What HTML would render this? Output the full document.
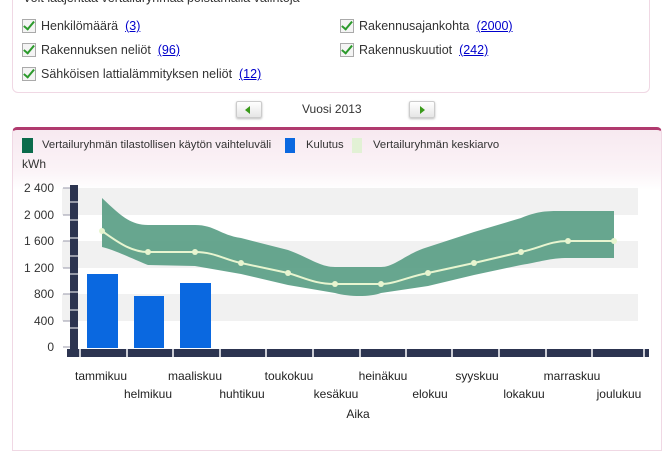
<!DOCTYPE html><html><head><style>
body{margin:0;width:662px;height:433px;overflow:hidden;background:#fff;font-family:"Liberation Sans",sans-serif;font-size:12px;color:#333;position:relative}
.a{position:absolute;white-space:nowrap}
.cb{position:absolute;width:12px;height:12px;border:1px solid #aaa;background:#f4f4f4}
.cb:after{content:"";position:absolute;left:3px;top:-1px;width:4px;height:9px;border:solid #2c9a2c;border-width:0 2px 2px 0;transform:rotate(40deg)}
a{color:#00c;text-decoration:underline}
.nb{position:absolute;width:24px;height:15px;border:1px solid #ccc;border-radius:2px;background:linear-gradient(#fff,#e6e6e6);box-shadow:0 1px 2px #bbb}
.t{font-size:12.5px}
</style></head><body>
<div class="a" style="left:12px;top:-12px;width:636px;height:103px;border:1px solid #f0d8e4;border-radius:6px"></div>
<div class="a t" style="left:23px;top:-9px">Voit laajentaa vertailuryhmää poistamalla valintoja</div>
<div class="cb" style="left:22px;top:19px"></div><div class="a t" style="left:41px;top:19px">Henkilömäärä &nbsp;<a>(3)</a></div>
<div class="cb" style="left:22px;top:43px"></div><div class="a t" style="left:41px;top:43px">Rakennuksen neliöt &nbsp;<a>(96)</a></div>
<div class="cb" style="left:22px;top:67px"></div><div class="a t" style="left:41px;top:67px">Sähköisen lattialämmityksen neliöt &nbsp;<a>(12)</a></div>
<div class="cb" style="left:340px;top:19px"></div><div class="a t" style="left:359px;top:19px">Rakennusajankohta &nbsp;<a>(2000)</a></div>
<div class="cb" style="left:340px;top:43px"></div><div class="a t" style="left:359px;top:43px">Rakennuskuutiot &nbsp;<a>(242)</a></div>
<div class="nb" style="left:236px;top:101px"><div style="position:absolute;left:8px;top:4px;border:4px solid transparent;border-right:5px solid #3a9a1a;border-left:0"></div></div>
<div class="a" style="left:302px;top:102px;font-size:12px">Vuosi 2013</div>
<div class="nb" style="left:409px;top:101px"><div style="position:absolute;left:10px;top:4px;border:4px solid transparent;border-left:5px solid #3a9a1a;border-right:0"></div></div>
<div class="a" style="left:12px;top:127px;width:648px;height:320px;border:1px solid #f0d8e4;border-top:3px solid #b03a6e;border-radius:5px 5px 0 0;background:linear-gradient(#f7e9f0 0,#fbf3f7 40px,#fff 60px)"></div>
<div class="a" style="left:22px;top:138px;width:11px;height:15px;background:#0b6b4b"></div>
<div class="a" style="left:42px;top:139px;font-size:11.3px">Vertailuryhmän tilastollisen käytön vaihteluväli</div>
<div class="a" style="left:285px;top:138px;width:10px;height:15px;background:#0a68e0"></div>
<div class="a" style="left:306px;top:139px;font-size:11.3px">Kulutus</div>
<div class="a" style="left:352px;top:138px;width:10px;height:15px;background:#e2f1d5"></div>
<div class="a" style="left:373px;top:139px;font-size:11.3px">Vertailuryhmän keskiarvo</div>
<div class="a" style="left:22px;top:157px;font-size:12px">kWh</div>
<svg class="a" style="left:0;top:0" width="662" height="433">
<g fill="#f1f1f1"><rect x="62" y="188" width="576" height="27"/><rect x="62" y="241" width="576" height="27"/><rect x="62" y="294" width="576" height="27"/></g>
<g font-size="12" fill="#333" text-anchor="end" font-family="Liberation Sans">
<text x="54" y="192">2 400</text><text x="54" y="219">2 000</text><text x="54" y="245">1 600</text><text x="54" y="272">1 200</text><text x="54" y="298">800</text><text x="54" y="325">400</text><text x="54" y="351">0</text></g>
<g stroke="#99a" stroke-width="1"><path d="M63 188h8M63 215h8M63 241h8M63 268h8M63 294h8M63 321h8M63 347h8"/></g>
<path fill="#5a9e86" fill-opacity=".92" d="M102 198 C120 215,130 225,148 225 L195 225 C215 225,220 235,241 238 L288 250 C310 258,320 267,335 267 L381 267 C395 267,405 254,428 247 L474 232 L521 218 C540 210,550 211,568 211 L614 211 L614 258 L568 258 C550 258,540 262,521 265 L474 275 L428 286 L381 293 C370 297,350 297,335 293 L288 285 L241 274 L195 266 L148 265 C135 260,115 250,102 247 Z"/>
<path fill="none" stroke="#e8f5d0" stroke-width="2" d="M102 231 C115 240,130 252,148 252 L195 252 C215 252,225 260,241 263 L288 273 C305 278,315 284,335 284 L381 284 C395 284,410 276,428 273 L474 263 L521 252 C540 248,550 241,568 241 L614 241"/>
<g fill="#e8f5d0"><circle cx="102" cy="231" r="3"/><circle cx="148" cy="252" r="3"/><circle cx="195" cy="252" r="3"/><circle cx="241" cy="263" r="3"/><circle cx="288" cy="273" r="3"/><circle cx="335" cy="284" r="3"/><circle cx="381" cy="284" r="3"/><circle cx="428" cy="273" r="3"/><circle cx="474" cy="263" r="3"/><circle cx="521" cy="252" r="3"/><circle cx="568" cy="241" r="3"/><circle cx="614" cy="241" r="3"/></g>
<g fill="#0a68e0"><rect x="87" y="274" width="31" height="74"/><rect x="134" y="296" width="30" height="52"/><rect x="180" y="283" width="31" height="65"/></g>
<rect x="70" y="185" width="8" height="170" fill="#2c3450"/>
<g stroke="#fff" stroke-width="1"><path d="M70 202h8M70 220h8M70 238h8M70 256h8M70 274h8M70 292h8M70 310h8M70 328h8"/></g>
<rect x="67" y="349" width="582" height="8" fill="#2c3450"/>
<g stroke="#fff" stroke-width="1.5"><path d="M80 349v8M127 349v8M173 349v8M220 349v8M266 349v8M313 349v8M360 349v8M406 349v8M452 349v8M499 349v8M546 349v8M592 349v8M644 349v8"/></g>
<g font-size="12" fill="#222" text-anchor="middle" font-family="Liberation Sans">
<text x="101" y="380">tammikuu</text><text x="148" y="398">helmikuu</text><text x="195" y="380">maaliskuu</text><text x="242" y="398">huhtikuu</text><text x="289" y="380">toukokuu</text><text x="336" y="398">kesäkuu</text><text x="383" y="380">heinäkuu</text><text x="430" y="398">elokuu</text><text x="477" y="380">syyskuu</text><text x="524" y="398">lokakuu</text><text x="572" y="380">marraskuu</text><text x="619" y="398">joulukuu</text>
<text x="358" y="418">Aika</text></g>
</svg>
</body></html>
